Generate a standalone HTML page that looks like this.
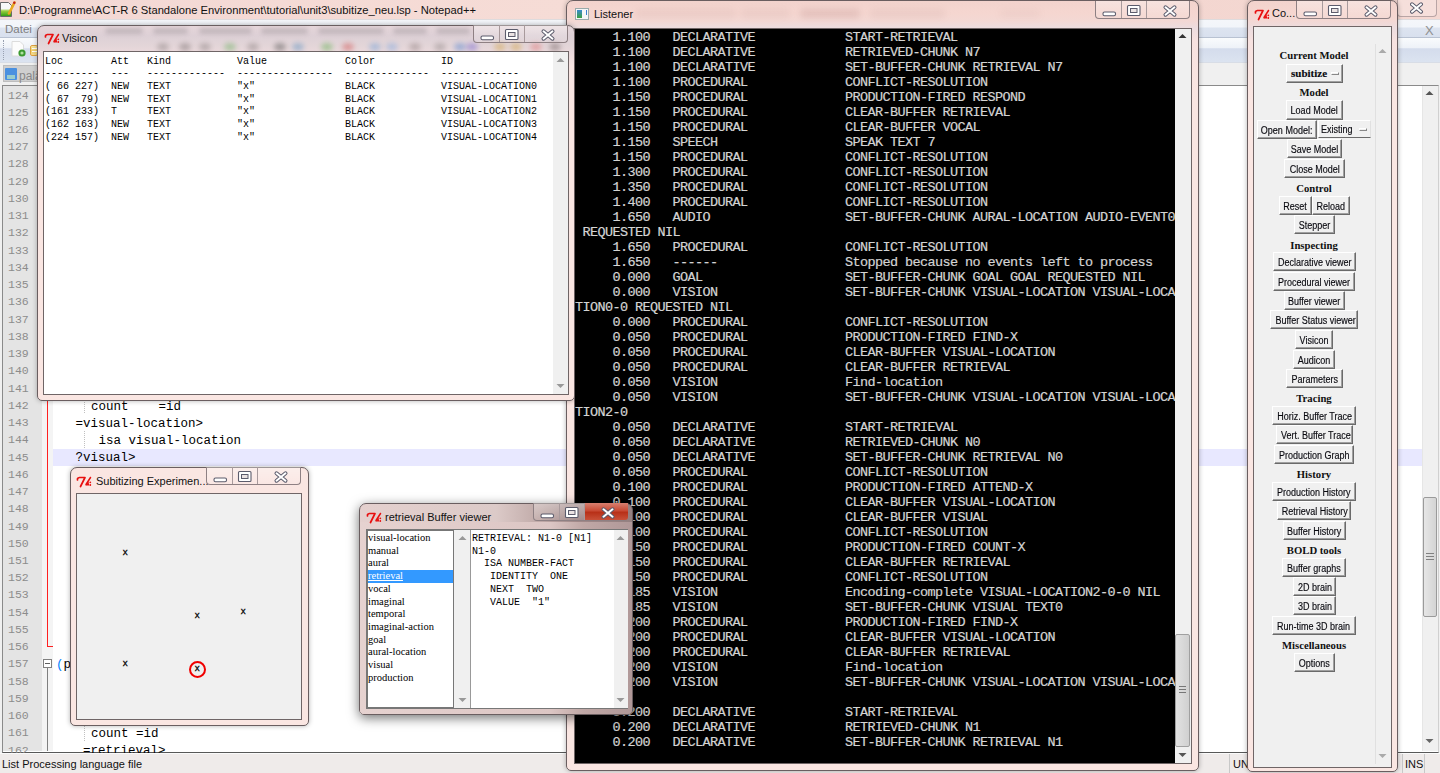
<!DOCTYPE html><html><head><meta charset="utf-8"><style>
*{margin:0;padding:0;box-sizing:border-box}
html,body{width:1440px;height:773px;overflow:hidden;background:#f0f0f0;font-family:'Liberation Sans', sans-serif;position:relative}
.abs{position:absolute}
.t{position:absolute;white-space:pre;line-height:1}
.win{position:absolute;border:1px solid #6a5e60;border-radius:7px 7px 5px 5px;
  background:#fae6e2;
  box-shadow:0 0 5px rgba(0,0,0,.3)}
.cli{position:absolute;border:1px solid #6f6566;overflow:hidden}
.cap{position:absolute;border:1px solid #8e8083;border-top:none;border-radius:0 0 4px 4px;
  background:linear-gradient(rgba(255,255,255,.35),rgba(255,255,255,.05));}
.cap .d{position:absolute;top:0;bottom:0;width:1px;background:#a89a9c}
.btn{position:absolute;background:#f0f0f0;border-top:1px solid #fff;border-left:1px solid #fff;
  border-right:1px solid #6a6a6a;border-bottom:1px solid #6a6a6a;box-shadow:inset -1px -1px 0 #a0a0a0;
  font:10px 'Liberation Sans', sans-serif;letter-spacing:0;color:#0a0a10;-webkit-text-stroke:0.15px #0a0a10;text-align:center;white-space:pre}
.hdr{position:absolute;font:bold 10.7px 'Liberation Serif', serif;color:#111;white-space:pre;text-align:center;line-height:1}
</style></head><body>
<div class="abs" style="left:0;top:0;width:1440px;height:19px;background:linear-gradient(90deg,#f3d8d4,#f6dcd6 40%,#f3d5cf 70%,#f4d8d2)"></div>
<div class="t" style="left:19px;top:3.5px;font:11.2px 'Liberation Sans', sans-serif;color:#111">D:\Programme\ACT-R 6 Standalone Environment\tutorial\unit3\subitize_neu.lsp - Notepad++</div>
<svg class="abs" style="left:0;top:1px" width="16" height="17" viewBox="0 0 16 17"><defs><linearGradient id="npg" x1="0" y1="0" x2="0" y2="1"><stop offset="0.45" stop-color="#f8f8f8"/><stop offset="0.6" stop-color="#9ad040"/><stop offset="1" stop-color="#2a9a10"/></linearGradient></defs><path d="M0.5 1.5 L8.5 1.5 L11.5 4.5 L11.5 15.5 L0.5 15.5Z" fill="url(#npg)" stroke="#6a6a6a"/><path d="M14.5 1.5 L9 12.5" stroke="#e8a820" stroke-width="2.6" stroke-linecap="round"/><circle cx="14.3" cy="1.8" r="1.2" fill="#c02020"/></svg>
<div class="abs" style="left:1397px;top:0;width:40px;height:17px;border:1px solid #b9a5a5;border-top:none;border-radius:0 0 4px 4px;background:rgba(255,255,255,.2)"></div>
<svg class="abs" style="left:1410px;top:0px" width="14" height="16" viewBox="0 0 14 16"><path d="M2 4.3 L11 11.7 M11 4.3 L2 11.7" stroke="#5c5c6c" stroke-width="4" stroke-linecap="round"/><path d="M2 4.3 L11 11.7 M11 4.3 L2 11.7" stroke="#fff" stroke-width="2" stroke-linecap="round"/></svg>
<div class="abs" style="left:0;top:19px;width:1440px;height:19px;background:linear-gradient(#c8c0c0,#f4f6fa 1px,#f2f5fa 8px,#dde4f0 9px,#d8e0ee);border-bottom:1px solid #b8c2d2"></div>
<div class="t" style="left:5px;top:23px;font:11.5px 'Liberation Sans', sans-serif;color:#808080">Datei</div>
<div class="t" style="left:1425px;top:23px;font:13px 'Liberation Sans', sans-serif;color:#909090">X</div>
<div class="abs" style="left:0;top:38px;width:1440px;height:24px;background:linear-gradient(#f9fbfd,#eef2f8 40%,#d4dcec 45%,#dbe3f0)"></div>
<div class="abs" style="left:3px;top:40px;width:2px;height:20px;border-left:1px dotted #98a0b0"></div>
<svg class="abs" style="left:10px;top:40px" width="16" height="18" viewBox="0 0 16 18"><path d="M2 1.5 L10 1.5 L13.5 5 L13.5 16 L2 16Z" fill="#fcfcfc" stroke="#dcdcdc"/><circle cx="12" cy="13" r="3.6" fill="#3c9a30"/><circle cx="12" cy="13" r="1.6" fill="#b0e0a0"/></svg>
<div class="abs" style="left:30px;top:45px;width:8px;height:11px;background:linear-gradient(#f8e8a0,#f0d070 50%,#f4dc90);border:1px solid #e0a040;border-radius:2px"></div><div class="abs" style="left:32px;top:48px;width:6px;height:1px;background:#fff"></div><div class="abs" style="left:32px;top:51px;width:6px;height:1px;background:#fff"></div>
<div class="abs" style="left:0;top:62px;width:1440px;height:23px;background:#f0f0f0;border-top:1px solid #d8dde6"></div>
<div class="abs" style="left:3px;top:65px;width:120px;height:17px;background:#cfcfcf;border:1px solid #bdbdbd"></div>
<div class="abs" style="left:5px;top:68px;width:12px;height:12px;background:#4a90e0;border-radius:1px"></div><div class="abs" style="left:7px;top:75px;width:8px;height:4px;background:#9cc"></div>
<div class="t" style="left:19px;top:69px;font:12px 'Liberation Sans', sans-serif;color:#888">palä</div>
<div class="abs" style="left:2px;top:85px;width:1437px;height:668px;background:#fff;border:1px solid #8a8a8a;border-bottom:1px solid #585858;border-right:1px solid #d0d0d0"></div>
<div class="abs" style="left:3px;top:86px;width:39px;height:665px;background:#e4e4e4"></div>
<div class="abs" style="left:42px;top:86px;width:11px;height:665px;background:#f4f4f4"></div>
<div class="t" style="left:8px;top:88.50px;font:11.5px 'Liberation Mono', monospace;color:#8c8c8c">124</div>
<div class="t" style="left:8px;top:105.74px;font:11.5px 'Liberation Mono', monospace;color:#8c8c8c">125</div>
<div class="t" style="left:8px;top:122.98px;font:11.5px 'Liberation Mono', monospace;color:#8c8c8c">126</div>
<div class="t" style="left:8px;top:140.22px;font:11.5px 'Liberation Mono', monospace;color:#8c8c8c">127</div>
<div class="t" style="left:8px;top:157.46px;font:11.5px 'Liberation Mono', monospace;color:#8c8c8c">128</div>
<div class="t" style="left:8px;top:174.70px;font:11.5px 'Liberation Mono', monospace;color:#8c8c8c">129</div>
<div class="t" style="left:8px;top:191.94px;font:11.5px 'Liberation Mono', monospace;color:#8c8c8c">130</div>
<div class="t" style="left:8px;top:209.18px;font:11.5px 'Liberation Mono', monospace;color:#8c8c8c">131</div>
<div class="t" style="left:8px;top:226.42px;font:11.5px 'Liberation Mono', monospace;color:#8c8c8c">132</div>
<div class="t" style="left:8px;top:243.66px;font:11.5px 'Liberation Mono', monospace;color:#8c8c8c">133</div>
<div class="t" style="left:8px;top:260.90px;font:11.5px 'Liberation Mono', monospace;color:#8c8c8c">134</div>
<div class="t" style="left:8px;top:278.14px;font:11.5px 'Liberation Mono', monospace;color:#8c8c8c">135</div>
<div class="t" style="left:8px;top:295.38px;font:11.5px 'Liberation Mono', monospace;color:#8c8c8c">136</div>
<div class="t" style="left:8px;top:312.62px;font:11.5px 'Liberation Mono', monospace;color:#8c8c8c">137</div>
<div class="t" style="left:8px;top:329.86px;font:11.5px 'Liberation Mono', monospace;color:#8c8c8c">138</div>
<div class="t" style="left:8px;top:347.10px;font:11.5px 'Liberation Mono', monospace;color:#8c8c8c">139</div>
<div class="t" style="left:8px;top:364.34px;font:11.5px 'Liberation Mono', monospace;color:#8c8c8c">140</div>
<div class="t" style="left:8px;top:381.58px;font:11.5px 'Liberation Mono', monospace;color:#8c8c8c">141</div>
<div class="t" style="left:8px;top:398.82px;font:11.5px 'Liberation Mono', monospace;color:#8c8c8c">142</div>
<div class="t" style="left:8px;top:416.06px;font:11.5px 'Liberation Mono', monospace;color:#8c8c8c">143</div>
<div class="t" style="left:8px;top:433.30px;font:11.5px 'Liberation Mono', monospace;color:#8c8c8c">144</div>
<div class="t" style="left:8px;top:450.54px;font:11.5px 'Liberation Mono', monospace;color:#8c8c8c">145</div>
<div class="t" style="left:8px;top:467.78px;font:11.5px 'Liberation Mono', monospace;color:#8c8c8c">146</div>
<div class="t" style="left:8px;top:485.02px;font:11.5px 'Liberation Mono', monospace;color:#8c8c8c">147</div>
<div class="t" style="left:8px;top:502.26px;font:11.5px 'Liberation Mono', monospace;color:#8c8c8c">148</div>
<div class="t" style="left:8px;top:519.50px;font:11.5px 'Liberation Mono', monospace;color:#8c8c8c">149</div>
<div class="t" style="left:8px;top:536.74px;font:11.5px 'Liberation Mono', monospace;color:#8c8c8c">150</div>
<div class="t" style="left:8px;top:553.98px;font:11.5px 'Liberation Mono', monospace;color:#8c8c8c">151</div>
<div class="t" style="left:8px;top:571.22px;font:11.5px 'Liberation Mono', monospace;color:#8c8c8c">152</div>
<div class="t" style="left:8px;top:588.46px;font:11.5px 'Liberation Mono', monospace;color:#8c8c8c">153</div>
<div class="t" style="left:8px;top:605.70px;font:11.5px 'Liberation Mono', monospace;color:#8c8c8c">154</div>
<div class="t" style="left:8px;top:622.94px;font:11.5px 'Liberation Mono', monospace;color:#8c8c8c">155</div>
<div class="t" style="left:8px;top:640.18px;font:11.5px 'Liberation Mono', monospace;color:#8c8c8c">156</div>
<div class="t" style="left:8px;top:657.42px;font:11.5px 'Liberation Mono', monospace;color:#8c8c8c">157</div>
<div class="t" style="left:8px;top:674.66px;font:11.5px 'Liberation Mono', monospace;color:#8c8c8c">158</div>
<div class="t" style="left:8px;top:691.90px;font:11.5px 'Liberation Mono', monospace;color:#8c8c8c">159</div>
<div class="t" style="left:8px;top:709.14px;font:11.5px 'Liberation Mono', monospace;color:#8c8c8c">160</div>
<div class="t" style="left:8px;top:726.38px;font:11.5px 'Liberation Mono', monospace;color:#8c8c8c">161</div>
<div class="t" style="left:8px;top:743.62px;font:11.5px 'Liberation Mono', monospace;color:#8c8c8c">162</div>
<div class="abs" style="left:47px;top:86px;width:1px;height:561px;background:#ff2020"></div>
<div class="abs" style="left:47px;top:646px;width:6px;height:1px;background:#ff2020"></div>
<div class="abs" style="left:47px;top:668px;width:1px;height:83px;background:#808080"></div>
<div class="abs" style="left:43px;top:659px;width:9px;height:9px;border:1px solid #808080;background:#fff"></div><div class="abs" style="left:45px;top:663px;width:5px;height:1px;background:#606060"></div>
<div class="abs" style="left:53px;top:448.5px;width:1369px;height:17px;background:#e8e8ff"></div>
<div class="t" style="left:91px;top:399.62px;font:12.5px 'Liberation Mono', monospace;color:#000">count    =id</div>
<div class="t" style="left:75.5px;top:416.86px;font:12.5px 'Liberation Mono', monospace;color:#000">=visual-location&gt;</div>
<div class="t" style="left:98.5px;top:434.10px;font:12.5px 'Liberation Mono', monospace;color:#000">isa visual-location</div>
<div class="t" style="left:75.5px;top:451.34px;font:12.5px 'Liberation Mono', monospace;color:#000">?visual&gt;</div>
<div class="t" style="left:56px;top:658.22px;font:12.5px 'Liberation Mono', monospace;color:#000"><span style="color:#0080ff">(</span>p</div>
<div class="t" style="left:91px;top:727.18px;font:12.5px 'Liberation Mono', monospace;color:#000">count =id</div>
<div class="t" style="left:83px;top:744.42px;font:12.5px 'Liberation Mono', monospace;color:#000">=retrieval&gt;</div>
<div class="abs" style="left:84px;top:396.4px;width:1px;height:17px;border-left:1px dotted #c0c0c0"></div>
<div class="abs" style="left:84px;top:430.9px;width:1px;height:17px;border-left:1px dotted #c0c0c0"></div>
<div class="abs" style="left:84px;top:724.0px;width:1px;height:17px;border-left:1px dotted #c0c0c0"></div>
<div class="abs" style="left:1422px;top:86px;width:16px;height:665px;background:#f0f0f0;border-left:1px solid #e6e6e6"></div>
<svg class="abs" style="left:1425px;top:90px" width="9" height="6"><path d="M0.5 5 L4.5 1 L8.5 5Z" fill="#555"/></svg><svg class="abs" style="left:1425px;top:738px" width="9" height="6"><path d="M0.5 1 L4.5 5 L8.5 1Z" fill="#666"/></svg>
<div class="abs" style="left:1423px;top:497px;width:14px;height:120px;background:linear-gradient(90deg,#e6e6e6,#d4d4d4);border:1px solid #9a9a9a;border-radius:2px"></div>
<div class="abs" style="left:1426px;top:553px;width:8px;height:7px;border-top:1px solid #808080;border-bottom:1px solid #808080"></div><div class="abs" style="left:1426px;top:556px;width:8px;height:1px;background:#808080"></div>
<div class="abs" style="left:0;top:753px;width:1440px;height:20px;background:#efebea;border-top:1px solid #fafafa"></div>
<div class="t" style="left:2px;top:758px;font:11px 'Liberation Sans', sans-serif;color:#111">List Processing language file</div>
<div class="abs" style="left:1229px;top:754px;width:1px;height:19px;background:#c8c8c8"></div>
<div class="t" style="left:1233px;top:758px;font:11px 'Liberation Sans', sans-serif;color:#111">UNIX</div>
<div class="abs" style="left:1402px;top:754px;width:1px;height:19px;background:#c8c8c8"></div><div class="abs" style="left:1424px;top:754px;width:1px;height:19px;background:#c8c8c8"></div>
<div class="t" style="left:1405px;top:758px;font:11px 'Liberation Sans', sans-serif;color:#111">INS</div>
<div class="win" style="left:566px;top:0px;width:633px;height:771px;background:linear-gradient(#f2d3cd,#f5d6d0 12px,#f3d8d4 20px,#ecdcdf 27px,#f7e2e0 40px,#fae6e2 100px)"></div>
<div class="abs" style="left:636px;top:9px;width:100px;height:9px;background:rgba(140,90,90,0.08);filter:blur(3px);border-radius:4px"></div><div class="abs" style="left:741px;top:9px;width:49px;height:9px;background:rgba(140,90,90,0.08);filter:blur(3px);border-radius:4px"></div><div class="abs" style="left:800px;top:9px;width:60px;height:9px;background:rgba(140,90,90,0.16);filter:blur(3px);border-radius:4px"></div><div class="abs" style="left:870px;top:9px;width:75px;height:9px;background:rgba(140,90,90,0.08);filter:blur(3px);border-radius:4px"></div><div class="abs" style="left:1000px;top:9px;width:40px;height:9px;background:rgba(140,90,90,0.05);filter:blur(3px);border-radius:4px"></div>
<div class="abs" style="left:575px;top:8px;width:14px;height:12px;background:#f4f6f8;border:1px solid #9aa"></div><div class="abs" style="left:577px;top:10px;width:5px;height:8px;background:linear-gradient(#3a8ad0,#3aa040)"></div><div class="abs" style="left:586px;top:10px;width:1px;height:5px;background:#3a80d0"></div>
<div class="t" style="left:594px;top:8px;font:11px 'Liberation Sans', sans-serif;color:#111">Listener</div>
<div class="cap" style="left:1095px;top:1px;width:95px;height:18px"><div class="d" style="left:25px"></div><div class="d" style="left:50px"></div><svg class="abs" style="left:0;top:0" width="95" height="18" viewBox="0 0 95 18"><rect x="7" y="11" width="12.5" height="3.8" rx="1.5" fill="#fff" stroke="#5c5c6c" stroke-width="1.1"/><rect x="31.5" y="4.5" width="12.5" height="10" rx="1" fill="#fff" stroke="#5c5c6c" stroke-width="1.1"/><rect x="34.5" y="7.5" width="6.5" height="4" fill="#eae2e2" stroke="#5c5c6c" stroke-width="1"/><path d="M69.5 6.3 L78.5 13.7 M78.5 6.3 L69.5 13.7" stroke="#5c5c6c" stroke-width="4" stroke-linecap="round"/><path d="M69.5 6.3 L78.5 13.7 M78.5 6.3 L69.5 13.7" stroke="#fff" stroke-width="2" stroke-linecap="round"/></svg></div>
<div class="cli" style="left:574px;top:28px;width:618px;height:736px;background:#000"></div>
<div class="abs" style="left:1175px;top:29px;width:16px;height:734px;background:#f0f0f0"></div>
<div class="abs" style="left:1175px;top:634px;width:15px;height:113px;background:linear-gradient(90deg,#e2e2e2,#d0d0d0);border:1px solid #a0a0a0;border-radius:2px"></div>
<div class="abs" style="left:1179px;top:686px;width:7px;height:7px;border-top:1px solid #777;border-bottom:1px solid #777"></div><div class="abs" style="left:1179px;top:689px;width:7px;height:1px;background:#777"></div>
<svg class="abs" style="left:1178px;top:33px" width="9" height="6"><path d="M0.5 5 L4.5 1 L8.5 5Z" fill="#333"/></svg>
<svg class="abs" style="left:1178px;top:752px" width="9" height="6"><path d="M0.5 1 L4.5 5 L8.5 1Z" fill="#555"/></svg>
<div class="abs" style="left:575px;top:29px;width:600px;height:734px;overflow:hidden">
<div class="t" style="left:0;top:0;font:13.5px 'Liberation Mono', monospace;letter-spacing:-0.6px;line-height:15px;color:#d4d4d4;-webkit-text-stroke:0.2px #d4d4d4;padding-top:0.8px">     1.100   DECLARATIVE            START-RETRIEVAL
     1.100   DECLARATIVE            RETRIEVED-CHUNK N7
     1.100   DECLARATIVE            SET-BUFFER-CHUNK RETRIEVAL N7
     1.100   PROCEDURAL             CONFLICT-RESOLUTION
     1.150   PROCEDURAL             PRODUCTION-FIRED RESPOND
     1.150   PROCEDURAL             CLEAR-BUFFER RETRIEVAL
     1.150   PROCEDURAL             CLEAR-BUFFER VOCAL
     1.150   SPEECH                 SPEAK TEXT 7
     1.150   PROCEDURAL             CONFLICT-RESOLUTION
     1.300   PROCEDURAL             CONFLICT-RESOLUTION
     1.350   PROCEDURAL             CONFLICT-RESOLUTION
     1.400   PROCEDURAL             CONFLICT-RESOLUTION
     1.650   AUDIO                  SET-BUFFER-CHUNK AURAL-LOCATION AUDIO-EVENT0
 REQUESTED NIL
     1.650   PROCEDURAL             CONFLICT-RESOLUTION
     1.650   ------                 Stopped because no events left to process
     0.000   GOAL                   SET-BUFFER-CHUNK GOAL GOAL REQUESTED NIL
     0.000   VISION                 SET-BUFFER-CHUNK VISUAL-LOCATION VISUAL-LOCA
TION0-0 REQUESTED NIL
     0.000   PROCEDURAL             CONFLICT-RESOLUTION
     0.050   PROCEDURAL             PRODUCTION-FIRED FIND-X
     0.050   PROCEDURAL             CLEAR-BUFFER VISUAL-LOCATION
     0.050   PROCEDURAL             CLEAR-BUFFER RETRIEVAL
     0.050   VISION                 Find-location
     0.050   VISION                 SET-BUFFER-CHUNK VISUAL-LOCATION VISUAL-LOCA
TION2-0
     0.050   DECLARATIVE            START-RETRIEVAL
     0.050   DECLARATIVE            RETRIEVED-CHUNK N0
     0.050   DECLARATIVE            SET-BUFFER-CHUNK RETRIEVAL N0
     0.050   PROCEDURAL             CONFLICT-RESOLUTION
     0.100   PROCEDURAL             PRODUCTION-FIRED ATTEND-X
     0.100   PROCEDURAL             CLEAR-BUFFER VISUAL-LOCATION
     0.100   PROCEDURAL             CLEAR-BUFFER VISUAL
     0.100   PROCEDURAL             CONFLICT-RESOLUTION
     0.150   PROCEDURAL             PRODUCTION-FIRED COUNT-X
     0.150   PROCEDURAL             CLEAR-BUFFER RETRIEVAL
     0.150   PROCEDURAL             CONFLICT-RESOLUTION
     0.185   VISION                 Encoding-complete VISUAL-LOCATION2-0-0 NIL
     0.185   VISION                 SET-BUFFER-CHUNK VISUAL TEXT0
     0.200   PROCEDURAL             PRODUCTION-FIRED FIND-X
     0.200   PROCEDURAL             CLEAR-BUFFER VISUAL-LOCATION
     0.200   PROCEDURAL             CLEAR-BUFFER RETRIEVAL
     0.200   VISION                 Find-location
     0.200   VISION                 SET-BUFFER-CHUNK VISUAL-LOCATION VISUAL-LOCA
TION3-0
     0.200   DECLARATIVE            START-RETRIEVAL
     0.200   DECLARATIVE            RETRIEVED-CHUNK N1
     0.200   DECLARATIVE            SET-BUFFER-CHUNK RETRIEVAL N1</div>
</div>
<div class="win" style="left:1247px;top:0px;width:151px;height:772px;background:linear-gradient(#f2d3cd,#f5d6d0 12px,#f3d8d4 20px,#ecdcdf 27px,#f7e2e0 40px,#fae6e2 100px)"></div>
<svg class="abs" style="left:1254px;top:9px" width="16" height="12" viewBox="0 0 16 12"><path d="M1.5 4 Q1 2 3.5 1.5 L9 1.5 L4.5 10.5" stroke="#e81010" stroke-width="1.7" fill="none" stroke-linecap="round" stroke-linejoin="round"/><path d="M14.5 1.5 L10 8.5" stroke="#e81010" stroke-width="1.5" fill="none" stroke-linecap="round"/><path d="M9.5 9.5 L12.5 5.5 L13.2 9.5Z" fill="#e81010"/><circle cx="14.3" cy="6.3" r="0.9" fill="#e81010"/><circle cx="14.3" cy="9" r="0.9" fill="#e81010"/></svg>
<div class="t" style="left:1272px;top:7px;font:11px 'Liberation Sans', sans-serif;color:#111">Co...</div>
<div class="cap" style="left:1296px;top:1px;width:95px;height:18px"><div class="d" style="left:25px"></div><div class="d" style="left:50px"></div><svg class="abs" style="left:0;top:0" width="95" height="18" viewBox="0 0 95 18"><rect x="7" y="11" width="12.5" height="3.8" rx="1.5" fill="#fff" stroke="#5c5c6c" stroke-width="1.1"/><rect x="31.5" y="4.5" width="12.5" height="10" rx="1" fill="#fff" stroke="#5c5c6c" stroke-width="1.1"/><rect x="34.5" y="7.5" width="6.5" height="4" fill="#eae2e2" stroke="#5c5c6c" stroke-width="1"/><path d="M69.5 6.3 L78.5 13.7 M78.5 6.3 L69.5 13.7" stroke="#5c5c6c" stroke-width="4" stroke-linecap="round"/><path d="M69.5 6.3 L78.5 13.7 M78.5 6.3 L69.5 13.7" stroke="#fff" stroke-width="2" stroke-linecap="round"/></svg></div>
<div class="cli" style="left:1253px;top:26px;width:139px;height:742px;background:#f0f0f0"></div>
<div class="abs" style="left:1375px;top:44px;width:1px;height:720px;background:#e0e0e0"></div>
<svg class="abs" style="left:1378px;top:48px" width="9" height="6"><path d="M0.5 5 L4.5 1 L8.5 5Z" fill="#aaa"/></svg>
<svg class="abs" style="left:1378px;top:753px" width="9" height="6"><path d="M0.5 1 L4.5 5 L8.5 1Z" fill="#aaa"/></svg>
<div class="hdr" style="left:1254px;width:120px;top:49.5px">Current Model</div>
<div class="btn" style="left:1286px;top:64px;width:57px;height:19px;line-height:17px;padding-top:1px;font:bold 11px 'Liberation Serif', serif;letter-spacing:0;text-align:left;padding-left:4px"><span style="position:relative;top:0.5px">subitize</span><div class="abs" style="right:3px;top:7px;width:8px;height:3px;border:1px solid #888;border-left-color:#fff;border-top-color:#fff"></div></div>
<div class="hdr" style="left:1254px;width:120px;top:86.5px">Model</div>
<div class="btn" style="left:1286px;top:100px;width:57px;height:20px;line-height:18px;padding-top:1px"><span style="display:inline-block;transform:scaleX(0.9);transform-origin:50% 50%">Load Model</span></div>
<div class="btn" style="left:1257px;top:120px;width:60px;height:19px;line-height:17px;padding-top:1px"><span style="display:inline-block;transform:scaleX(0.9);transform-origin:50% 50%">Open Model:</span></div>
<div class="btn" style="left:1318px;top:120px;width:53px;height:18px;line-height:16px;padding-top:1px;text-align:left;padding-left:2px;border-right-color:#e0e0e0;box-shadow:none"><span style="display:inline-block;transform:scaleX(0.9);transform-origin:0 50%">Existing</span><div class="abs" style="right:3px;top:7px;width:8px;height:3px;border:1px solid #888;border-left-color:#fff;border-top-color:#fff"></div></div>
<div class="btn" style="left:1287px;top:139px;width:55px;height:19px;line-height:17px;padding-top:1px"><span style="display:inline-block;transform:scaleX(0.9);transform-origin:50% 50%">Save Model</span></div>
<div class="btn" style="left:1284px;top:159px;width:61px;height:19px;line-height:17px;padding-top:1px"><span style="display:inline-block;transform:scaleX(0.9);transform-origin:50% 50%">Close Model</span></div>
<div class="hdr" style="left:1254px;width:120px;top:182.5px">Control</div>
<div class="btn" style="left:1279px;top:196px;width:33px;height:19px;line-height:17px;padding-top:1px"><span style="display:inline-block;transform:scaleX(0.9);transform-origin:50% 50%">Reset</span></div>
<div class="btn" style="left:1312px;top:196px;width:38px;height:19px;line-height:17px;padding-top:1px"><span style="display:inline-block;transform:scaleX(0.9);transform-origin:50% 50%">Reload</span></div>
<div class="btn" style="left:1294px;top:215px;width:41px;height:19px;line-height:17px;padding-top:1px"><span style="display:inline-block;transform:scaleX(0.9);transform-origin:50% 50%">Stepper</span></div>
<div class="hdr" style="left:1254px;width:120px;top:239.5px">Inspecting</div>
<div class="btn" style="left:1273px;top:252px;width:83px;height:19px;line-height:17px;padding-top:1px"><span style="display:inline-block;transform:scaleX(0.9);transform-origin:50% 50%">Declarative viewer</span></div>
<div class="btn" style="left:1273px;top:272px;width:82px;height:19px;line-height:17px;padding-top:1px"><span style="display:inline-block;transform:scaleX(0.9);transform-origin:50% 50%">Procedural viewer</span></div>
<div class="btn" style="left:1284px;top:291px;width:61px;height:19px;line-height:17px;padding-top:1px"><span style="display:inline-block;transform:scaleX(0.9);transform-origin:50% 50%">Buffer viewer</span></div>
<div class="btn" style="left:1270px;top:310px;width:88px;height:19px;line-height:17px;padding-top:1px"><span style="display:inline-block;transform:scaleX(0.9);transform-origin:50% 50%">Buffer Status viewer</span></div>
<div class="btn" style="left:1295px;top:330px;width:38px;height:19px;line-height:17px;padding-top:1px"><span style="display:inline-block;transform:scaleX(0.9);transform-origin:50% 50%">Visicon</span></div>
<div class="btn" style="left:1293px;top:350px;width:42px;height:19px;line-height:17px;padding-top:1px"><span style="display:inline-block;transform:scaleX(0.9);transform-origin:50% 50%">Audicon</span></div>
<div class="btn" style="left:1286px;top:369px;width:57px;height:19px;line-height:17px;padding-top:1px"><span style="display:inline-block;transform:scaleX(0.9);transform-origin:50% 50%">Parameters</span></div>
<div class="hdr" style="left:1254px;width:120px;top:392.5px">Tracing</div>
<div class="btn" style="left:1272px;top:406px;width:84px;height:19px;line-height:17px;padding-top:1px"><span style="display:inline-block;transform:scaleX(0.9);transform-origin:50% 50%">Horiz. Buffer Trace</span></div>
<div class="btn" style="left:1276px;top:425px;width:77px;height:19px;line-height:17px;padding-top:1px"><span style="display:inline-block;transform:scaleX(0.9);transform-origin:50% 50%">Vert. Buffer Trace</span></div>
<div class="btn" style="left:1274px;top:445px;width:80px;height:19px;line-height:17px;padding-top:1px"><span style="display:inline-block;transform:scaleX(0.9);transform-origin:50% 50%">Production Graph</span></div>
<div class="hdr" style="left:1254px;width:120px;top:468.5px">History</div>
<div class="btn" style="left:1272px;top:482px;width:84px;height:19px;line-height:17px;padding-top:1px"><span style="display:inline-block;transform:scaleX(0.9);transform-origin:50% 50%">Production History</span></div>
<div class="btn" style="left:1277px;top:501px;width:74px;height:19px;line-height:17px;padding-top:1px"><span style="display:inline-block;transform:scaleX(0.9);transform-origin:50% 50%">Retrieval History</span></div>
<div class="btn" style="left:1283px;top:521px;width:63px;height:19px;line-height:17px;padding-top:1px"><span style="display:inline-block;transform:scaleX(0.9);transform-origin:50% 50%">Buffer History</span></div>
<div class="hdr" style="left:1254px;width:120px;top:544.5px">BOLD tools</div>
<div class="btn" style="left:1282px;top:558px;width:64px;height:19px;line-height:17px;padding-top:1px"><span style="display:inline-block;transform:scaleX(0.9);transform-origin:50% 50%">Buffer graphs</span></div>
<div class="btn" style="left:1293px;top:577px;width:43px;height:19px;line-height:17px;padding-top:1px"><span style="display:inline-block;transform:scaleX(0.9);transform-origin:50% 50%">2D brain</span></div>
<div class="btn" style="left:1293px;top:596px;width:43px;height:19px;line-height:17px;padding-top:1px"><span style="display:inline-block;transform:scaleX(0.9);transform-origin:50% 50%">3D brain</span></div>
<div class="btn" style="left:1272px;top:616px;width:84px;height:19px;line-height:17px;padding-top:1px"><span style="display:inline-block;transform:scaleX(0.9);transform-origin:50% 50%">Run-time 3D brain</span></div>
<div class="hdr" style="left:1254px;width:120px;top:639.5px">Miscellaneous</div>
<div class="btn" style="left:1294px;top:653px;width:41px;height:19px;line-height:17px;padding-top:1px"><span style="display:inline-block;transform:scaleX(0.9);transform-origin:50% 50%">Options</span></div>
<div class="win" style="left:37px;top:25px;width:538px;height:376px;background:linear-gradient(#e6d6da,#ddd0d6 10px,#e3d5d8 20px,#ead9dc 26px,#f7e4e2 40px,#fae6e2 100px)"></div>
<div class="abs" style="left:105px;top:28px;width:38px;height:6px;background:rgba(120,110,120,.28);filter:blur(2px);border-radius:3px"></div><div class="abs" style="left:153px;top:28px;width:35px;height:6px;background:rgba(120,110,120,.28);filter:blur(2px);border-radius:3px"></div><div class="abs" style="left:199px;top:28px;width:53px;height:6px;background:rgba(120,110,120,.28);filter:blur(2px);border-radius:3px"></div><div class="abs" style="left:261px;top:28px;width:47px;height:6px;background:rgba(120,110,120,.28);filter:blur(2px);border-radius:3px"></div><div class="abs" style="left:318px;top:28px;width:66px;height:6px;background:rgba(120,110,120,.28);filter:blur(2px);border-radius:3px"></div><div class="abs" style="left:393px;top:28px;width:34px;height:6px;background:rgba(120,110,120,.28);filter:blur(2px);border-radius:3px"></div><div class="abs" style="left:436px;top:28px;width:34px;height:6px;background:rgba(120,110,120,.28);filter:blur(2px);border-radius:3px"></div><div class="abs" style="left:157px;top:43px;width:12px;height:8px;background:#8a8080;opacity:.45;filter:blur(2.5px);border-radius:50%"></div><div class="abs" style="left:179px;top:43px;width:12px;height:8px;background:#7a7070;opacity:.45;filter:blur(2.5px);border-radius:50%"></div><div class="abs" style="left:199px;top:43px;width:12px;height:8px;background:#8a8080;opacity:.45;filter:blur(2.5px);border-radius:50%"></div><div class="abs" style="left:224px;top:43px;width:12px;height:8px;background:#6ab060;opacity:.45;filter:blur(2.5px);border-radius:50%"></div><div class="abs" style="left:247px;top:43px;width:12px;height:8px;background:#8a8080;opacity:.45;filter:blur(2.5px);border-radius:50%"></div><div class="abs" style="left:274px;top:43px;width:12px;height:8px;background:#505050;opacity:.45;filter:blur(2.5px);border-radius:50%"></div><div class="abs" style="left:292px;top:43px;width:12px;height:8px;background:#5a90c0;opacity:.45;filter:blur(2.5px);border-radius:50%"></div><div class="abs" style="left:321px;top:43px;width:12px;height:8px;background:#60b050;opacity:.45;filter:blur(2.5px);border-radius:50%"></div><div class="abs" style="left:342px;top:43px;width:12px;height:8px;background:#d05050;opacity:.45;filter:blur(2.5px);border-radius:50%"></div><div class="abs" style="left:369px;top:43px;width:12px;height:8px;background:#70a0d8;opacity:.45;filter:blur(2.5px);border-radius:50%"></div><div class="abs" style="left:386px;top:43px;width:12px;height:8px;background:#80a8e0;opacity:.45;filter:blur(2.5px);border-radius:50%"></div><div class="abs" style="left:409px;top:43px;width:12px;height:8px;background:#908080;opacity:.45;filter:blur(2.5px);border-radius:50%"></div><div class="abs" style="left:434px;top:43px;width:12px;height:8px;background:#908888;opacity:.45;filter:blur(2.5px);border-radius:50%"></div><div class="abs" style="left:454px;top:43px;width:12px;height:8px;background:#5080d0;opacity:.45;filter:blur(2.5px);border-radius:50%"></div><div class="abs" style="left:466px;top:43px;width:12px;height:8px;background:#7060d0;opacity:.45;filter:blur(2.5px);border-radius:50%"></div><div class="abs" style="left:494px;top:43px;width:12px;height:8px;background:#d0a040;opacity:.45;filter:blur(2.5px);border-radius:50%"></div><div class="abs" style="left:510px;top:43px;width:12px;height:8px;background:#d0a040;opacity:.45;filter:blur(2.5px);border-radius:50%"></div><div class="abs" style="left:530px;top:43px;width:12px;height:8px;background:#e07070;opacity:.45;filter:blur(2.5px);border-radius:50%"></div><div class="abs" style="left:549px;top:43px;width:12px;height:8px;background:#706060;opacity:.45;filter:blur(2.5px);border-radius:50%"></div>
<svg class="abs" style="left:44px;top:33px" width="16" height="12" viewBox="0 0 16 12"><path d="M1.5 4 Q1 2 3.5 1.5 L9 1.5 L4.5 10.5" stroke="#e81010" stroke-width="1.7" fill="none" stroke-linecap="round" stroke-linejoin="round"/><path d="M14.5 1.5 L10 8.5" stroke="#e81010" stroke-width="1.5" fill="none" stroke-linecap="round"/><path d="M9.5 9.5 L12.5 5.5 L13.2 9.5Z" fill="#e81010"/><circle cx="14.3" cy="6.3" r="0.9" fill="#e81010"/><circle cx="14.3" cy="9" r="0.9" fill="#e81010"/></svg>
<div class="t" style="left:62px;top:32px;font:11px 'Liberation Sans', sans-serif;color:#111">Visicon</div>
<div class="cap" style="left:473px;top:25px;width:95px;height:18px"><div class="d" style="left:25px"></div><div class="d" style="left:50px"></div><svg class="abs" style="left:0;top:0" width="95" height="18" viewBox="0 0 95 18"><rect x="7" y="11" width="12.5" height="3.8" rx="1.5" fill="#fff" stroke="#5c5c6c" stroke-width="1.1"/><rect x="31.5" y="4.5" width="12.5" height="10" rx="1" fill="#fff" stroke="#5c5c6c" stroke-width="1.1"/><rect x="34.5" y="7.5" width="6.5" height="4" fill="#eae2e2" stroke="#5c5c6c" stroke-width="1"/><path d="M69.5 6.3 L78.5 13.7 M78.5 6.3 L69.5 13.7" stroke="#5c5c6c" stroke-width="4" stroke-linecap="round"/><path d="M69.5 6.3 L78.5 13.7 M78.5 6.3 L69.5 13.7" stroke="#fff" stroke-width="2" stroke-linecap="round"/></svg></div>
<div class="cli" style="left:43px;top:51px;width:526px;height:344px;background:#fff"></div>
<div class="abs" style="left:553px;top:52px;width:15px;height:342px;background:#f0f0f0"></div>
<svg class="abs" style="left:556px;top:57px" width="9" height="6"><path d="M0.5 5 L4.5 1 L8.5 5Z" fill="#999"/></svg>
<svg class="abs" style="left:556px;top:383px" width="9" height="6"><path d="M0.5 1 L4.5 5 L8.5 1Z" fill="#999"/></svg>
<div class="t" style="left:45px;top:55.7px;font:10px 'Liberation Mono', monospace;line-height:12.8px;color:#000">Loc        Att   Kind           Value             Color           ID</div>
<div class="t" style="left:45px;top:67.6px;font:10px 'Liberation Mono', monospace;line-height:12.8px;color:#000">---------  ---   -------------  ----------------  --------------  -------------</div>
<div class="t" style="left:45px;top:81.1px;font:10px 'Liberation Mono', monospace;line-height:12.8px;color:#000">( 66 227)  NEW   TEXT           &quot;x&quot;               BLACK           VISUAL-LOCATION0</div>
<div class="t" style="left:45px;top:94.0px;font:10px 'Liberation Mono', monospace;line-height:12.8px;color:#000">( 67  79)  NEW   TEXT           &quot;x&quot;               BLACK           VISUAL-LOCATION1</div>
<div class="t" style="left:45px;top:106.4px;font:10px 'Liberation Mono', monospace;line-height:12.8px;color:#000">(161 233)  T     TEXT           &quot;x&quot;               BLACK           VISUAL-LOCATION2</div>
<div class="t" style="left:45px;top:119.4px;font:10px 'Liberation Mono', monospace;line-height:12.8px;color:#000">(162 163)  NEW   TEXT           &quot;x&quot;               BLACK           VISUAL-LOCATION3</div>
<div class="t" style="left:45px;top:132.3px;font:10px 'Liberation Mono', monospace;line-height:12.8px;color:#000">(224 157)  NEW   TEXT           &quot;x&quot;               BLACK           VISUAL-LOCATION4</div>
<div class="win" style="left:70px;top:467px;width:239px;height:259px"></div>
<svg class="abs" style="left:76px;top:476px" width="16" height="12" viewBox="0 0 16 12"><path d="M1.5 4 Q1 2 3.5 1.5 L9 1.5 L4.5 10.5" stroke="#e81010" stroke-width="1.7" fill="none" stroke-linecap="round" stroke-linejoin="round"/><path d="M14.5 1.5 L10 8.5" stroke="#e81010" stroke-width="1.5" fill="none" stroke-linecap="round"/><path d="M9.5 9.5 L12.5 5.5 L13.2 9.5Z" fill="#e81010"/><circle cx="14.3" cy="6.3" r="0.9" fill="#e81010"/><circle cx="14.3" cy="9" r="0.9" fill="#e81010"/></svg>
<div class="t" style="left:96px;top:475px;font:11px 'Liberation Sans', sans-serif;color:#111">Subitizing Experimen...</div>
<div class="cap" style="left:206px;top:467px;width:95px;height:18px"><div class="d" style="left:25px"></div><div class="d" style="left:50px"></div><svg class="abs" style="left:0;top:0" width="95" height="18" viewBox="0 0 95 18"><rect x="7" y="11" width="12.5" height="3.8" rx="1.5" fill="#fff" stroke="#5c5c6c" stroke-width="1.1"/><rect x="31.5" y="4.5" width="12.5" height="10" rx="1" fill="#fff" stroke="#5c5c6c" stroke-width="1.1"/><rect x="34.5" y="7.5" width="6.5" height="4" fill="#eae2e2" stroke="#5c5c6c" stroke-width="1"/><path d="M69.5 6.3 L78.5 13.7 M78.5 6.3 L69.5 13.7" stroke="#5c5c6c" stroke-width="4" stroke-linecap="round"/><path d="M69.5 6.3 L78.5 13.7 M78.5 6.3 L69.5 13.7" stroke="#fff" stroke-width="2" stroke-linecap="round"/></svg></div>
<div class="cli" style="left:76px;top:493px;width:226px;height:227px;background:#f0f0f0"></div>
<div class="t" style="left:122.5px;top:547.5px;font:9px 'Liberation Mono', monospace;color:#000;-webkit-text-stroke:0.3px #000">x</div>
<div class="t" style="left:194.5px;top:610.5px;font:9px 'Liberation Mono', monospace;color:#000;-webkit-text-stroke:0.3px #000">x</div>
<div class="t" style="left:240.5px;top:606.5px;font:9px 'Liberation Mono', monospace;color:#000;-webkit-text-stroke:0.3px #000">x</div>
<div class="t" style="left:122.5px;top:658.5px;font:9px 'Liberation Mono', monospace;color:#000;-webkit-text-stroke:0.3px #000">x</div>
<div class="t" style="left:194.5px;top:663.5px;font:9px 'Liberation Mono', monospace;color:#000;-webkit-text-stroke:0.3px #000">x</div>
<div class="abs" style="left:189px;top:661px;width:17px;height:17px;border:2.6px solid #f00000;border-radius:50%"></div>
<div class="win" style="left:359px;top:503px;width:274px;height:212px;background:linear-gradient(90deg,#e4d0ce,#dccac8 50%,#c0aaa8 66%,#a08888 80%,#948080);box-shadow:0 3px 12px rgba(0,0,0,.55)"></div><div class="abs" style="left:360px;top:522px;width:272px;height:192px;background:linear-gradient(90deg,#e6d2d0,#dcc6c4 70%,#c0a8a6 82%,#b09898);border-radius:0 0 4px 4px"></div>
<svg class="abs" style="left:366px;top:512px" width="16" height="12" viewBox="0 0 16 12"><path d="M1.5 4 Q1 2 3.5 1.5 L9 1.5 L4.5 10.5" stroke="#e81010" stroke-width="1.7" fill="none" stroke-linecap="round" stroke-linejoin="round"/><path d="M14.5 1.5 L10 8.5" stroke="#e81010" stroke-width="1.5" fill="none" stroke-linecap="round"/><path d="M9.5 9.5 L12.5 5.5 L13.2 9.5Z" fill="#e81010"/><circle cx="14.3" cy="6.3" r="0.9" fill="#e81010"/><circle cx="14.3" cy="9" r="0.9" fill="#e81010"/></svg>
<div class="t" style="left:385px;top:511px;font:11px 'Liberation Sans', sans-serif;color:#111">retrieval Buffer viewer</div>
<div class="cap" style="left:533px;top:503px;width:95px;height:18px"><div class="d" style="left:25px"></div><div class="d" style="left:50px"></div><div class="abs" style="left:51px;top:0;width:43px;height:17px;background:linear-gradient(#d88070,#c84a34 45%,#b83018 55%,#c85038);border-radius:0 0 3px 0"></div><svg class="abs" style="left:0;top:0" width="95" height="18" viewBox="0 0 95 18"><rect x="7" y="11" width="12.5" height="3.8" rx="1.5" fill="#fff" stroke="#5c5c6c" stroke-width="1.1"/><rect x="31.5" y="4.5" width="12.5" height="10" rx="1" fill="#fff" stroke="#5c5c6c" stroke-width="1.1"/><rect x="34.5" y="7.5" width="6.5" height="4" fill="#eae2e2" stroke="#5c5c6c" stroke-width="1"/><path d="M69.5 6.3 L78.5 13.7 M78.5 6.3 L69.5 13.7" stroke="#5c5c6c" stroke-width="4" stroke-linecap="round"/><path d="M69.5 6.3 L78.5 13.7 M78.5 6.3 L69.5 13.7" stroke="#fff" stroke-width="2" stroke-linecap="round"/></svg></div>
<div class="cli" style="left:366px;top:529px;width:262px;height:180px;background:#f0f0f0;border-color:#777"></div>
<div class="abs" style="left:367px;top:530px;width:87px;height:178px;background:#fff;border:1px solid #777"></div>
<div class="abs" style="left:454px;top:530px;width:16px;height:178px;background:#f0f0f0"></div>
<svg class="abs" style="left:458px;top:535px" width="9" height="6"><path d="M0.5 5 L4.5 1 L8.5 5Z" fill="#999"/></svg>
<svg class="abs" style="left:458px;top:697px" width="9" height="6"><path d="M0.5 1 L4.5 5 L8.5 1Z" fill="#999"/></svg>
<div class="abs" style="left:368px;top:570px;width:85px;height:13px;background:#3399ff"></div>
<div class="t" style="left:368px;top:532.0px;font:10.5px 'Liberation Serif', serif;color:#000;">visual-location</div>
<div class="t" style="left:368px;top:544.7px;font:10.5px 'Liberation Serif', serif;color:#000;">manual</div>
<div class="t" style="left:368px;top:557.4px;font:10.5px 'Liberation Serif', serif;color:#000;">aural</div>
<div class="t" style="left:368px;top:570.1px;font:10.5px 'Liberation Serif', serif;color:#fff;text-decoration:underline;">retrieval</div>
<div class="t" style="left:368px;top:582.8px;font:10.5px 'Liberation Serif', serif;color:#000;">vocal</div>
<div class="t" style="left:368px;top:595.5px;font:10.5px 'Liberation Serif', serif;color:#000;">imaginal</div>
<div class="t" style="left:368px;top:608.2px;font:10.5px 'Liberation Serif', serif;color:#000;">temporal</div>
<div class="t" style="left:368px;top:620.9px;font:10.5px 'Liberation Serif', serif;color:#000;">imaginal-action</div>
<div class="t" style="left:368px;top:633.6px;font:10.5px 'Liberation Serif', serif;color:#000;">goal</div>
<div class="t" style="left:368px;top:646.3px;font:10.5px 'Liberation Serif', serif;color:#000;">aural-location</div>
<div class="t" style="left:368px;top:659.0px;font:10.5px 'Liberation Serif', serif;color:#000;">visual</div>
<div class="t" style="left:368px;top:671.7px;font:10.5px 'Liberation Serif', serif;color:#000;">production</div>
<div class="abs" style="left:470px;top:530px;width:158px;height:178px;background:#fff;border-left:1px solid #999"></div>
<div class="abs" style="left:614px;top:530px;width:14px;height:178px;background:#f0f0f0"></div>
<svg class="abs" style="left:616px;top:535px" width="9" height="6"><path d="M0.5 5 L4.5 1 L8.5 5Z" fill="#999"/></svg>
<svg class="abs" style="left:616px;top:697px" width="9" height="6"><path d="M0.5 1 L4.5 5 L8.5 1Z" fill="#999"/></svg>
<div class="t" style="left:472px;top:533px;font:10px 'Liberation Mono', monospace;line-height:12.7px;color:#000">RETRIEVAL: N1-0 [N1]
N1-0
  ISA NUMBER-FACT
   IDENTITY  ONE
   NEXT  TWO
   VALUE  &quot;1&quot;</div>
</body></html>
